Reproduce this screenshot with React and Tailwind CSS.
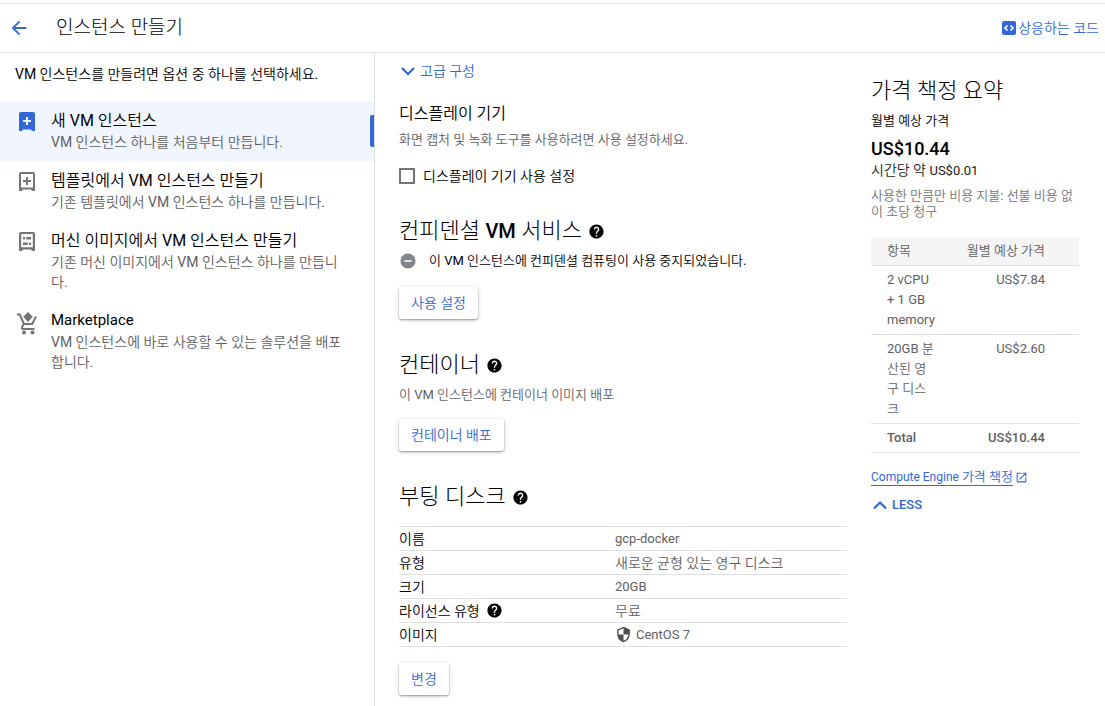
import React from "react";
import {
  MdArrowBack,
  MdHelp,
  MdRemoveCircle,
  MdSecurity,
  MdOpenInNew,
} from "react-icons/md";

function NewVmIcon() {
  return (
    <svg width="16" height="19" viewBox="0 0 16 19" aria-hidden="true">
      <path
        fill="currentColor"
        fillRule="evenodd"
        d="M2 0h12a2 2 0 0 1 2 2v17h-3l-1-1.500H4L3 19H0V2a2 2 0 0 1 2-2zM7 5v3H4v2h3v3h2v-3h3V8H9V5z"
      />
    </svg>
  );
}

function TemplateIcon() {
  return (
    <svg width="16" height="19" viewBox="0 0 16 19" aria-hidden="true">
      <path
        fill="currentColor"
        fillRule="evenodd"
        d="M2 0h12a2 2 0 0 1 2 2v17h-3l-1-1.500H4L3 19H0V2a2 2 0 0 1 2-2zM2 2v13.500h12V2zM7 5h2v3h3v2H9v3H7v-3H4V8h3z"
      />
    </svg>
  );
}

function MachineImageIcon() {
  return (
    <svg width="16" height="19" viewBox="0 0 16 20" preserveAspectRatio="none" aria-hidden="true">
      <path
        fill="currentColor"
        fillRule="evenodd"
        d="M2 0h12a2 2 0 0 1 2 2v18h-3l-1-1.500H4L3 20H0V2a2 2 0 0 1 2-2zM2.200 2.200v13.800h11.600V2.200zM4 5.200h2v2.800H4zM7.200 5.200H12v2.800H7.200zM4 11h4.800v2.800H4zM10 11h2v2.800h-2z"
      />
    </svg>
  );
}

function MarketplaceIcon() {
  return (
    <svg width="20" height="23" viewBox="0 0 20 23" aria-hidden="true">
      <path d="M11 0l4.800 4.800L11 10 6.200 4.800z" fill="currentColor" />
      <path
        d="M0 2.500h2.800L7 12h8.200L19 4.500M6.600 12l-1.600 3.300c-.3.900.1 1.700 1 1.700h11.500"
        fill="none"
        stroke="currentColor"
        strokeWidth="2"
      />
      <circle cx="7" cy="20.500" r="2" fill="currentColor" />
      <circle cx="15.500" cy="20.500" r="2" fill="currentColor" />
    </svg>
  );
}

function CodeBadgeIcon() {
  return (
    <svg width="14" height="14" viewBox="0 0 14 14" aria-hidden="true">
      <rect width="14" height="14" rx="2" fill="#3367d6" />
      <path d="M5.500 4.500L3 7l2.500 2.500M8.500 4.500L11 7 8.500 9.500" fill="none" stroke="#fff" strokeWidth="1.700" />
    </svg>
  );
}

function Chevron({ up }) {
  return (
    <svg width="18" height="18" viewBox="0 0 18 18" aria-hidden="true">
      <path d={up ? "M3 12.500l6-6 6 6" : "M3 6l6 6 6-6"} fill="none" stroke="currentColor" strokeWidth="2.200" />
    </svg>
  );
}

const options = [
  { icon: NewVmIcon, title: "새 VM 인스턴스", text: "VM 인스턴스 하나를 처음부터 만듭니다.", active: true },
  { icon: TemplateIcon, title: "템플릿에서 VM 인스턴스 만들기", text: "기존 템플릿에서 VM 인스턴스 하나를 만듭니다." },
  { icon: MachineImageIcon, title: "머신 이미지에서 VM 인스턴스 만들기", text: "기존 머신 이미지에서 VM 인스턴스 하나를 만듭니다." },
  {
    icon: MarketplaceIcon,
    title: "Marketplace",
    titleSize: "text-[15px]",
    text: "VM 인스턴스에 바로 사용할 수 있는 솔루션을 배포합니다.",
  },
];

function Option({ icon: Icon, title, titleSize = "text-base", text, active }) {
  return (
    <li>
      <a
        href="#"
        aria-current={active ? "page" : undefined}
        className={`relative flex pt-2 pr-8 pb-[9px] ${active ? "bg-[#f0f5ff]" : ""}`}
      >
        <span className={`flex w-[51px] shrink-0 justify-center pt-[3px] pl-[3px] ${active ? "text-[#3367d6]" : "text-[#757575]"}`}>
          <Icon />
        </span>
        <span>
          <span className={`block text-black ${titleSize} leading-[23px]`}>{title}</span>
          <span className="block text-sm leading-5 text-[#616161]">{text}</span>
        </span>
        {active && <span className="absolute top-3.5 right-0 h-8 w-1 rounded-l-[2px] bg-[#3367d6]" />}
      </a>
    </li>
  );
}

function Help() {
  return (
    <button type="button" aria-label="도움말" className="shrink-0 text-black">
      <MdHelp size={17} />
    </button>
  );
}

function SectionTitle({ children }) {
  return (
    <div className="flex items-center gap-1.5">
      <h2 className="font-[Roboto,'Noto_Sans_CJK_KR_Light','Noto_Sans_CJK_KR',sans-serif] text-[22px] leading-7 text-black">
        {children}
      </h2>
      <Help />
    </div>
  );
}

function RaisedButton({ children }) {
  return (
    <button
      type="button"
      className="h-8 rounded-[3px] bg-white px-3 text-sm text-[#3367d6] shadow-[0_1px_2px_rgba(0,0,0,0.35),0_1px_5px_rgba(0,0,0,0.15)]"
    >
      {children}
    </button>
  );
}

const disk = [
  { name: "이름", value: "gcp-docker", size: "text-[13px]" },
  { name: "유형", value: "새로운 균형 있는 영구 디스크", size: "text-sm" },
  { name: "크기", value: "20GB", size: "text-[13px]" },
  { name: "라이선스 유형", value: "무료", size: "text-sm", help: true },
  { name: "이미지", value: "CentOS 7", size: "text-[13px]", shield: true },
];

const costs = [
  ["2 vCPU + 1 GB memory", "US$7.84"],
  ["20GB 분산된 영구 디스크", "US$2.60"],
];

export default function App() {
  return (
    <div className="flex min-h-screen flex-col bg-white pt-[3px] font-[Roboto,'Noto_Sans_CJK_KR_DemiLight','Noto_Sans_CJK_KR',sans-serif] text-black">
      <header className="flex h-[50px] items-center border-y border-[#e0e0e0] pr-1.5 pb-px pl-2">
        <button type="button" aria-label="뒤로" className="text-[#3367d6]">
          <MdArrowBack size={22} />
        </button>
        <h1 className="ml-[26px] font-[Roboto,'Noto_Sans_CJK_KR_Light','Noto_Sans_CJK_KR',sans-serif] text-[19px] leading-7">
          인스턴스 만들기
        </h1>
        <a href="#" className="ml-auto flex items-center gap-0.5 text-sm text-[#3367d6]">
          <CodeBadgeIcon />
          상응하는 코드
        </a>
      </header>

      <div className="flex flex-1">
        <nav className="w-[375px] shrink-0 border-r border-[#e0e0e0]">
          <p className="px-[15px] pt-[11px] pb-[17px] text-sm leading-5">VM 인스턴스를 만들려면 옵션 중 하나를 선택하세요.</p>
          <ul>
            {options.map((o) => (
              <Option key={o.title} {...o} />
            ))}
          </ul>
        </nav>

        <main className="min-w-0 flex-1 px-6 pt-2 pb-2">
          <button type="button" className="flex h-5 items-center gap-[3px] text-sm text-[#3367d6]">
            <Chevron />
            고급 구성
          </button>

          <h3 className="mt-[21px] text-base leading-6">디스플레이 기기</h3>
          <p className="mt-1 text-[13px] leading-5 text-[#616161]">화면 캡처 및 녹화 도구를 사용하려면 사용 설정하세요.</p>
          <label className="mt-3.5 flex h-6 items-center gap-2 text-sm">
            <input type="checkbox" className="size-4 appearance-none border-2 border-[#757575] bg-white" />
            디스플레이 기기 사용 설정
          </label>

          <section className="mt-[29px]">
            <SectionTitle>
              컨피덴셜 <span className="text-xl font-medium">VM</span> 서비스
            </SectionTitle>
            <p className="mt-1.5 mb-4 flex items-center gap-3 text-[13px] leading-5">
              <MdRemoveCircle size={18} className="shrink-0 text-[#80868b]" />
              이 VM 인스턴스에 컨피덴셜 컴퓨팅이 사용 중지되었습니다.
            </p>
            <RaisedButton>사용 설정</RaisedButton>
          </section>

          <section className="mt-8">
            <SectionTitle>컨테이너</SectionTitle>
            <p className="mt-1.5 mb-3.5 text-[13px] leading-5 text-[#616161]">이 VM 인스턴스에 컨테이너 이미지 배포</p>
            <RaisedButton>컨테이너 배포</RaisedButton>
          </section>

          <section className="mt-8">
            <SectionTitle>부팅 디스크</SectionTitle>
            <table className="mt-[15px] mb-4 w-full border-separate border-spacing-0 border-t border-[#e0e0e0] text-left">
              <tbody>
                {disk.map(({ name, value, size, help, shield }) => (
                  <tr key={name}>
                    <th scope="row" className="h-6 w-[216px] border-b border-[#e0e0e0] p-0 text-sm leading-5 font-normal">
                      <span className="flex items-center gap-1.5">
                        {name}
                        {help && <Help />}
                      </span>
                    </th>
                    <td className={`h-6 border-b border-[#e0e0e0] p-0 ${size} leading-5 text-[#616161]`}>
                      <span className="flex items-center gap-1">
                        {shield && <MdSecurity size={17} className="text-[#505050]" />}
                        {value}
                      </span>
                    </td>
                  </tr>
                ))}
              </tbody>
            </table>
            <RaisedButton>변경</RaisedButton>
          </section>
        </main>

        <aside className="mr-[26px] w-[208px] shrink-0 pt-6">
          <h2 className="font-[Roboto,'Noto_Sans_CJK_KR_Light','Noto_Sans_CJK_KR',sans-serif] text-[22px] leading-7">
            가격 책정 요약
          </h2>
          <p className="mt-1.5 text-[13px] leading-5">월별 예상 가격</p>
          <p className="mt-1.5 text-lg leading-6 font-medium">US$10.44</p>
          <p className="text-sm leading-[18px] text-[#212121]">
            시간당 약 <span className="text-[13px]">US$0.01</span>
          </p>
          <p className="mt-2 text-[13px] leading-4 text-[#757575]">사용한 만큼만 비용 지불: 선불 비용 없이 초당 청구</p>

          <table className="mt-[17px] w-full table-fixed border-separate border-spacing-0 text-[13px] leading-5 text-[#616161]">
            <thead>
              <tr className="bg-[#f5f5f5]">
                <th className="w-[66px] border-b border-[#e0e0e0] py-1 pr-0 pl-4 text-left font-normal">항목</th>
                <th className="border-b border-[#e0e0e0] py-1 pr-[34px] pl-0 text-right font-normal">월별 예상 가격</th>
              </tr>
            </thead>
            <tbody>
              {costs.map(([item, price]) => (
                <tr key={item} className="align-top">
                  <td className="border-b border-[#e0e0e0] py-1 pr-0 pl-4">{item}</td>
                  <td className="border-b border-[#e0e0e0] py-1 pr-[34px] pl-0 text-right">{price}</td>
                </tr>
              ))}
              <tr className="font-medium">
                <td className="border-b border-[#e0e0e0] py-1 pr-0 pl-4">Total</td>
                <td className="border-b border-[#e0e0e0] py-1 pr-[34px] pl-0 text-right">US$10.44</td>
              </tr>
            </tbody>
          </table>

          <a href="#" className="mt-4 flex items-center gap-0.5 text-xs leading-4 text-[#3367d6]">
            <span className="border-b border-[#3367d6]">
              Compute Engine <span className="text-[13px] leading-4">가격 책정</span>
            </span>
            <MdOpenInNew size={13} />
          </a>
          <button type="button" className="mt-[9px] flex h-5 items-center gap-[3px] text-[13px] font-medium text-[#3367d6]">
            <Chevron up />
            LESS
          </button>
        </aside>
      </div>
    </div>
  );
}
